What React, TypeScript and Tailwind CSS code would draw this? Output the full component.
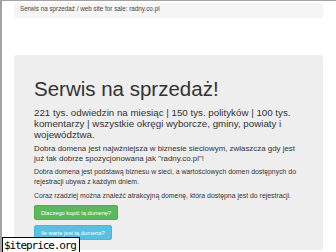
import React from "react";

export default function App() {
  return (
    <div className="relative w-[336px] h-[252px] overflow-hidden bg-white border-t border-l-2 border-[#a3a3a3] font-['Liberation_Sans',Arial,sans-serif]">
      <div className="pl-[12px] pr-[13px] pt-[2px]">
        <div className="h-[15px] bg-[#f5f5f5] rounded-[2px] pl-[6px] pt-[2px] text-[6.3px] leading-[8px] text-[#444]">
          Serwis na sprzedaż / web site for sale: radny.co.pl
        </div>
        <div className="mt-[37px] h-[195px] bg-[#eeeeee] rounded-[3px] pl-[20px] pr-[20px] pt-[22px] text-[#333]">
          <h1 className="text-[20.5px] leading-[24px] font-normal">Serwis na sprzedaż!</h1>
          <p className="mt-[5.5px] text-[9.75px] leading-[11.3px]">
            221 tys. odwiedzin na miesiąc | 150 tys. polityków | 100 tys. komentarzy | wszystkie okręgi wyborcze, gminy, powiaty i województwa.
          </p>
          <p className="mt-[4px] text-[7.9px] leading-[10px]">
            Dobra domena jest najwżniejsza w biznesie sieciowym, zwłaszcza gdy jest już tak dobrze spozycjonowana jak "radny.co.pl"!
          </p>
          <p className="mt-[3px] text-[6.9px] leading-[10px]">
            Dobra domena jest podstawą biznesu w sieci, a wartościowych domen dostępnych do rejestracji ubywa z każdym dniem.
          </p>
          <p className="mt-[3.5px] text-[6.9px] leading-[10px]">
            Coraz rzadziej można znaleźć atrakcyjną domenę, która dostępna jest do rejestracji.
          </p>
          <div className="mt-[4.5px] flex flex-col items-start gap-[5px]">
            <div className="h-[15px] inline-flex items-center px-[6px] bg-[#5cb85c] border border-[#4cae4c] rounded-[2px] text-white text-[5.7px]">
              Dlaczego kupić tą domenę?
            </div>
            <div className="h-[15px] inline-flex items-center px-[6px] bg-[#5bc0de] border border-[#46b8da] rounded-[2px] text-white text-[5.7px]">
              Ile warte jest tą domena?
            </div>
          </div>
        </div>
      </div>
      <div className="absolute left-0 top-[236px] h-[18px] w-[78px] border border-black bg-white pl-[1px] font-['DejaVu_Sans_Mono',monospace] text-[11px] leading-[15px] tracking-[-1.1px] text-black">
        $iteprice.org
      </div>
    </div>
  );
}
